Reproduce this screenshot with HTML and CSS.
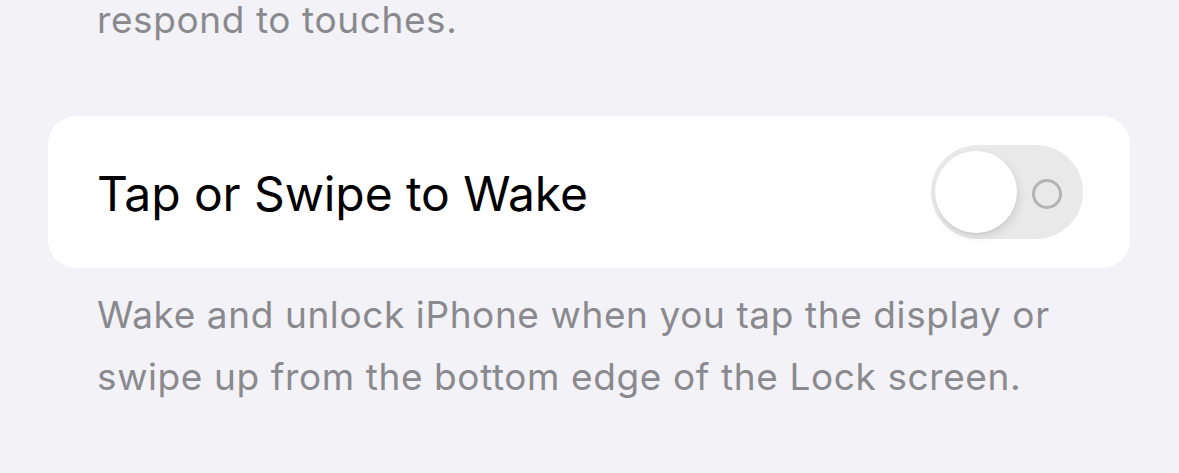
FILE: index.html
```html
<!DOCTYPE html>
<html>
<head>
<meta charset="utf-8">
<link rel="stylesheet" href="styles.css">
</head>
<body>
<div class="page">
  <p class="footer top-footer">respond to touches.</p>
  <div class="card">
    <span class="label">Tap or Swipe to Wake</span>
    <div class="toggle">
      <div class="knob"></div>
      <div class="ring"></div>
    </div>
  </div>
  <p class="footer">Wake and unlock iPhone when you tap the display or<br>swipe up from the bottom edge of the Lock screen.</p>
</div>
</body>
</html>
```
FILE: styles.css
```css
html, body {
  margin: 0;
  padding: 0;
  background: #f2f2f7;
}
.page {
  padding: 0 49px 0 48px;
  font-family: Inter, "Noto Sans", sans-serif;
}
.footer {
  margin: 0;
  padding-left: 49px;
  color: #8a8a8e;
  font-size: 37px;
  line-height: 62px;
  letter-spacing: 0.6px;
}
.top-footer {
  line-height: 40px;
  margin-bottom: 76px;
}
.card {
  background: #fff;
  border-radius: 28px;
  height: 152px;
  display: flex;
  align-items: center;
  justify-content: space-between;
  padding: 0 47px 0 49px;
  margin-bottom: 16px;
}
.label {
  font-size: 48px;
  color: #000;
  letter-spacing: -0.1px;
  margin-top: 2px;
}
.toggle {
  width: 152px;
  height: 94px;
  border-radius: 47px;
  background: #e9e9ea;
  position: relative;
  display: flex;
  align-items: center;
  padding: 0 4px;
  box-sizing: border-box;
}
.knob {
  width: 82px;
  height: 82px;
  border-radius: 50%;
  background: #fff;
  box-shadow: 2px 4px 8px rgba(0,0,0,0.1), 0 2px 1px rgba(0,0,0,0.04);
}
.ring {
  position: absolute;
  left: 101px;
  top: 34px;
  width: 24px;
  height: 24px;
  border: 3px solid #b3b3b3;
  border-radius: 50%;
}
```
